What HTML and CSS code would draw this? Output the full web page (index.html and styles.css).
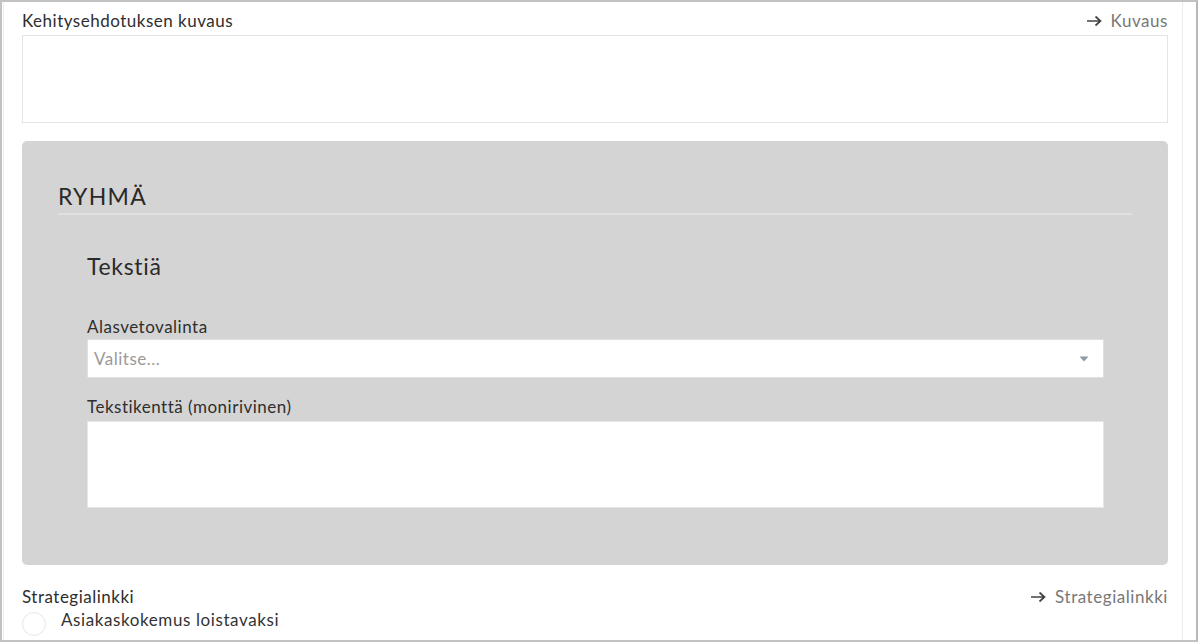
FILE: index.html
```html
<!DOCTYPE html>
<html lang="fi">
<head>
<meta charset="utf-8">
<link rel="stylesheet" href="styles.css">
</head>
<body>
<div class="frame">
  <div class="scroller">
    <div class="content">
      <div class="field-head">
        <span class="label">Kehitysehdotuksen kuvaus</span>
        <span class="link"><svg class="arrow" width="16" height="12" viewBox="0 0 16 12"><path d="M1 6H14.5M9.5 1.5L14.5 6L9.5 10.5" fill="none" stroke="#444" stroke-width="1.7"/></svg>Kuvaus</span>
      </div>
      <div class="textarea top-area"></div>

      <section class="group">
        <h2 class="group-title">RYHMÄ</h2>
        <div class="group-body">
          <h3 class="sub-title">Tekstiä</h3>
          <div class="label inner-label">Alasvetovalinta</div>
          <div class="select">
            <span class="placeholder">Valitse...</span>
            <svg class="caret" width="10" height="6" viewBox="0 0 10 6"><path d="M0.5 0.5H9.5L5 5.5Z" fill="#8a9aa6"/></svg>
          </div>
          <div class="label inner-label second">Tekstikenttä (monirivinen)</div>
          <div class="textarea inner-area"></div>
        </div>
      </section>

      <div class="field-head strat">
        <span class="label">Strategialinkki</span>
        <span class="link"><svg class="arrow" width="16" height="12" viewBox="0 0 16 12"><path d="M1 6H14.5M9.5 1.5L14.5 6L9.5 10.5" fill="none" stroke="#444" stroke-width="1.7"/></svg>Strategialinkki</span>
      </div>
      <div class="radio-row">
        <span class="radio"></span>
        <span class="radio-text">Asiakaskokemus loistavaksi</span>
      </div>
    </div>
  </div>
</div>
</body>
</html>
```

FILE: styles.css
```css
* { box-sizing: border-box; }
html, body { margin: 0; padding: 0; background: #fff; }
body {
  font-family: Lato, "Open Sans", "Liberation Sans", sans-serif;
  color: #333;
}
.frame {
  width: 1198px;
  height: 642px;
  border: 2px solid #c2c2c2;
  border-right: 2px solid #b8b8b8;
  overflow: hidden;
  background: #fff;
  padding-left: 1px;
}
.scroller {
  height: 100%;
  width: 1180px;
  border-left: 1px solid #ececec;
  border-right: 1px solid #ececec;
  overflow: hidden;
}
.content {
  padding: 9px 14px 0 18px;
}
.field-head {
  display: flex;
  justify-content: space-between;
  align-items: center;
  height: 20px;
}
.label {
  font-size: 17px;
  letter-spacing: 0.5px;
  line-height: 20px;
  color: #2e2e2e;
}
.link {
  font-size: 17px;
  letter-spacing: 0.55px;
  line-height: 20px;
  color: #777;
  display: flex;
  align-items: center;
}
.arrow { margin-right: 9px; }
.textarea {
  background: #fff;
  border: 1px solid #e4e4e4;
}
.top-area {
  margin-top: 4px;
  height: 88px;
}
.group {
  margin-top: 18px;
  background: #d4d4d4;
  border-radius: 5px;
  height: 424px;
  padding: 40px 36px 0 36px;
}
.group-title {
  margin: 0;
  font-size: 23px;
  letter-spacing: 1.3px;
  font-weight: 400;
  line-height: 30px;
  color: #2a2a2a;
  padding-bottom: 2px;
  border-bottom: 2px solid #e0e0e0;
}
.group-body {
  padding: 0 28px 0 29px;
}
.sub-title {
  margin: 36px 0 0 0;
  font-size: 23px;
  letter-spacing: 0.7px;
  font-weight: 400;
  line-height: 30px;
  color: #2a2a2a;
}
.inner-label { margin-top: 36px; }
.inner-label.second { margin-top: 19px; }
.select {
  margin-top: 2px;
  height: 39px;
  background: #fff;
  border: 1px solid #e0e0e0;
  display: flex;
  align-items: center;
  justify-content: space-between;
  padding: 0 14px 0 6px;
}
.placeholder {
  font-size: 17px;
  letter-spacing: 0.5px;
  color: #9a9a9a;
}
.caret { margin-top: 1px; }
.inner-area {
  margin-top: 4px;
  height: 87px;
  border-color: #e6e6e6;
}
.strat { margin-top: 22px; }
.radio-row {
  display: flex;
  align-items: flex-start;
  margin-top: 3px;
}
.radio {
  width: 24px;
  height: 24px;
  border-radius: 50%;
  border: 1px solid #e6e6e6;
  background: #fff;
  flex: none;
  margin-top: 2px;
}
.radio-text {
  margin-left: 15px;
  font-size: 17px;
  letter-spacing: 0.6px;
  line-height: 20px;
  color: #333;
}
```
